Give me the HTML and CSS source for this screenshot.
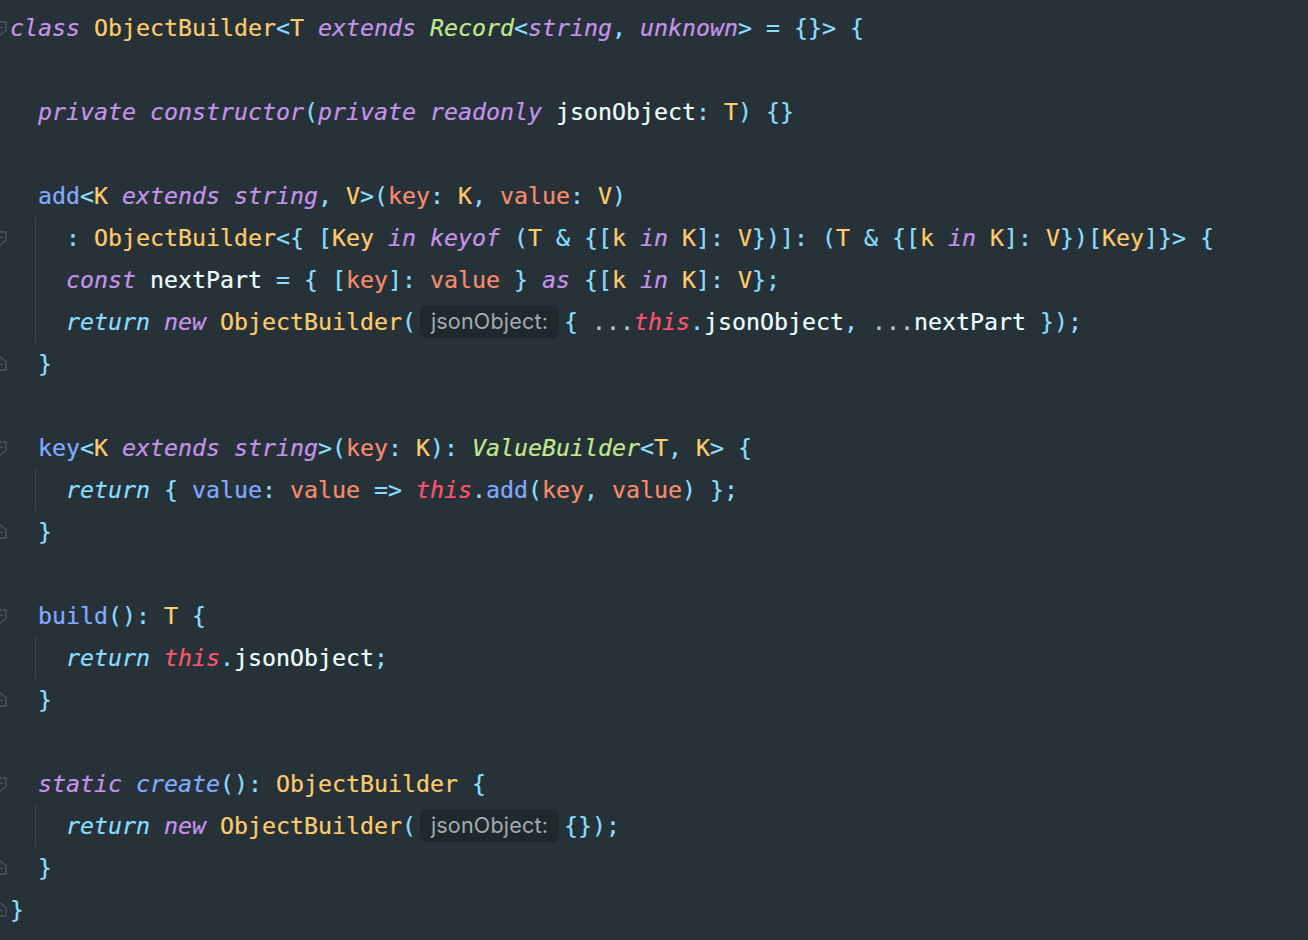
FILE: index.html
```html
<!DOCTYPE html>
<html>
<head>
<meta charset="utf-8">
<title>ObjectBuilder.ts</title>
<link rel="stylesheet" href="styles.css">
</head>
<body>
<div class="editor">
  <div class="line"><span class="gut"><svg class="fold" viewBox="0 0 16 16"><path d="M2 2h12v8.5l-6 4.5-6-4.5z"/><path d="M5 7.5h6"/></svg></span><span class="k">class</span> <span class="t">ObjectBuilder</span><span class="p">&lt;</span><span class="t">T</span> <span class="k">extends</span> <span class="g">Record</span><span class="p">&lt;</span><span class="k">string</span><span class="p">,</span> <span class="k">unknown</span><span class="p">&gt;</span> <span class="p">=</span> <span class="p">{}&gt;</span> <span class="p">{</span></div>
  <div class="line"><span class="gut"></span></div>
  <div class="line"><span class="gut"></span>  <span class="k">private</span> <span class="k">constructor</span><span class="p">(</span><span class="k">private</span> <span class="k">readonly</span> <span class="w">jsonObject</span><span class="p">:</span> <span class="t">T</span><span class="p">)</span> <span class="p">{}</span></div>
  <div class="line"><span class="gut"></span></div>
  <div class="line"><span class="gut"></span>  <span class="f">add</span><span class="p">&lt;</span><span class="t">K</span> <span class="k">extends</span> <span class="k">string</span><span class="p">,</span> <span class="t">V</span><span class="p">&gt;(</span><span class="o">key</span><span class="p">:</span> <span class="t">K</span><span class="p">,</span> <span class="o">value</span><span class="p">:</span> <span class="t">V</span><span class="p">)</span></div>
  <div class="line"><span class="gut"><svg class="fold" viewBox="0 0 16 16"><path d="M2 2h12v8.5l-6 4.5-6-4.5z"/><path d="M5 7.5h6"/></svg></span><span class="ind"></span><span class="guide"></span><span class="p">:</span> <span class="t">ObjectBuilder</span><span class="p">&lt;{ [</span><span class="t">Key</span> <span class="k">in</span> <span class="k">keyof</span> <span class="p">(</span><span class="t">T</span> <span class="p">&amp;</span> <span class="p">{[</span><span class="t">k</span> <span class="k">in</span> <span class="t">K</span><span class="p">]:</span> <span class="t">V</span><span class="p">})]:</span> <span class="p">(</span><span class="t">T</span> <span class="p">&amp;</span> <span class="p">{[</span><span class="t">k</span> <span class="k">in</span> <span class="t">K</span><span class="p">]:</span> <span class="t">V</span><span class="p">})[</span><span class="t">Key</span><span class="p">]}&gt;</span> <span class="p">{</span></div>
  <div class="line"><span class="gut"></span><span class="ind"></span><span class="guide"></span><span class="k">const</span> <span class="w">nextPart</span> <span class="p">=</span> <span class="p">{</span> <span class="p">[</span><span class="o">key</span><span class="p">]:</span> <span class="o">value</span> <span class="p">}</span> <span class="k">as</span> <span class="p">{[</span><span class="t">k</span> <span class="k">in</span> <span class="t">K</span><span class="p">]:</span> <span class="t">V</span><span class="p">};</span></div>
  <div class="line"><span class="gut"></span><span class="ind"></span><span class="guide"></span><span class="ret">return</span> <span class="k">new</span> <span class="t">ObjectBuilder</span><span class="p">(</span><span class="hint">jsonObject:</span><span class="p">{</span> <span class="s">...</span><span class="r">this</span><span class="p">.</span><span class="w">jsonObject</span><span class="p">,</span> <span class="s">...</span><span class="w">nextPart</span> <span class="p">});</span></div>
  <div class="line"><span class="gut"><svg class="fold" viewBox="0 0 16 16"><path d="M2 14h12v-8.5l-6-4.5-6 4.5z"/><path d="M5 8.5h6"/></svg></span>  <span class="p">}</span></div>
  <div class="line"><span class="gut"></span></div>
  <div class="line"><span class="gut"><svg class="fold" viewBox="0 0 16 16"><path d="M2 2h12v8.5l-6 4.5-6-4.5z"/><path d="M5 7.5h6"/></svg></span>  <span class="f">key</span><span class="p">&lt;</span><span class="t">K</span> <span class="k">extends</span> <span class="k">string</span><span class="p">&gt;(</span><span class="o">key</span><span class="p">:</span> <span class="t">K</span><span class="p">):</span> <span class="g">ValueBuilder</span><span class="p">&lt;</span><span class="t">T</span><span class="p">,</span> <span class="t">K</span><span class="p">&gt;</span> <span class="p">{</span></div>
  <div class="line"><span class="gut"></span><span class="ind"></span><span class="guide"></span><span class="ret">return</span> <span class="p">{</span> <span class="f">value</span><span class="p">:</span> <span class="o">value</span> <span class="p">=&gt;</span> <span class="r">this</span><span class="p">.</span><span class="f">add</span><span class="p">(</span><span class="o">key</span><span class="p">,</span> <span class="o">value</span><span class="p">)</span> <span class="p">};</span></div>
  <div class="line"><span class="gut"><svg class="fold" viewBox="0 0 16 16"><path d="M2 14h12v-8.5l-6-4.5-6 4.5z"/><path d="M5 8.5h6"/></svg></span>  <span class="p">}</span></div>
  <div class="line"><span class="gut"></span></div>
  <div class="line"><span class="gut"><svg class="fold" viewBox="0 0 16 16"><path d="M2 2h12v8.5l-6 4.5-6-4.5z"/><path d="M5 7.5h6"/></svg></span>  <span class="f">build</span><span class="p">():</span> <span class="t">T</span> <span class="p">{</span></div>
  <div class="line"><span class="gut"></span><span class="ind"></span><span class="guide"></span><span class="ret">return</span> <span class="r">this</span><span class="p">.</span><span class="w">jsonObject</span><span class="p">;</span></div>
  <div class="line"><span class="gut"><svg class="fold" viewBox="0 0 16 16"><path d="M2 14h12v-8.5l-6-4.5-6 4.5z"/><path d="M5 8.5h6"/></svg></span>  <span class="p">}</span></div>
  <div class="line"><span class="gut"></span></div>
  <div class="line"><span class="gut"><svg class="fold" viewBox="0 0 16 16"><path d="M2 2h12v8.5l-6 4.5-6-4.5z"/><path d="M5 7.5h6"/></svg></span>  <span class="k">static</span> <span class="fi">create</span><span class="p">():</span> <span class="t">ObjectBuilder</span> <span class="p">{</span></div>
  <div class="line"><span class="gut"></span><span class="ind"></span><span class="guide"></span><span class="ret">return</span> <span class="k">new</span> <span class="t">ObjectBuilder</span><span class="p">(</span><span class="hint">jsonObject:</span><span class="p">{});</span></div>
  <div class="line"><span class="gut"><svg class="fold" viewBox="0 0 16 16"><path d="M2 14h12v-8.5l-6-4.5-6 4.5z"/><path d="M5 8.5h6"/></svg></span>  <span class="p">}</span></div>
  <div class="line"><span class="gut"><svg class="fold" viewBox="0 0 16 16"><path d="M2 14h12v-8.5l-6-4.5-6 4.5z"/><path d="M5 8.5h6"/></svg></span><span class="p">}</span></div>
</div>
</body>
</html>
```
FILE: styles.css
```css
html, body {
  margin: 0;
  padding: 0;
  background: #263238;
  height: 100%;
  overflow: hidden;
}

.editor {
  padding-top: 7px;
  font-family: "DejaVu Sans Mono", "Liberation Mono", monospace;
  font-size: 23.25px;
  color: #eeffff;
  -webkit-text-stroke: 0.2px currentColor;
}

.line {
  height: 42px;
  line-height: 42px;
  white-space: pre;
}

.gut {
  display: inline-block;
  width: 10px;
  height: 42px;
  vertical-align: top;
  overflow: hidden;
}

.fold {
  display: block;
  width: 16px;
  height: 16px;
  margin-left: -8px;
  margin-top: 13px;
  fill: none;
  stroke: #4d585e;
  stroke-width: 1.3;
}

.ind {
  display: inline-block;
  width: 25px;
  height: 42px;
  vertical-align: top;
}

.guide {
  display: inline-block;
  width: 30px;
  height: 42px;
  vertical-align: top;
  border-left: 1px solid #3a474e;
}

.k { color: #c792ea; font-style: italic; }
.t { color: #ffcb6b; }
.p { color: #89ddff; }
.g { color: #c3e88d; font-style: italic; }
.f { color: #82aaff; }
.fi { color: #82aaff; font-style: italic; }
.o { color: #f78c6c; }
.w { color: #eeffff; }
.r { color: #ff5370; font-style: italic; }
.ret { color: #89ddff; font-style: italic; }
.s { color: #b9c2c7; }

.hint {
  display: inline-block;
  box-sizing: border-box;
  width: 139px;
  height: 33px;
  margin: 4px 5px 0 4px;
  vertical-align: top;
  line-height: 33px;
  text-align: center;
  border-radius: 7px;
  background: #1e282d;
  color: #a3abaf;
  font-family: Inter, "Noto Sans", sans-serif;
  font-size: 21.5px;
  font-style: normal;
  letter-spacing: 0.2px;
  -webkit-text-stroke: 0;
}
```
